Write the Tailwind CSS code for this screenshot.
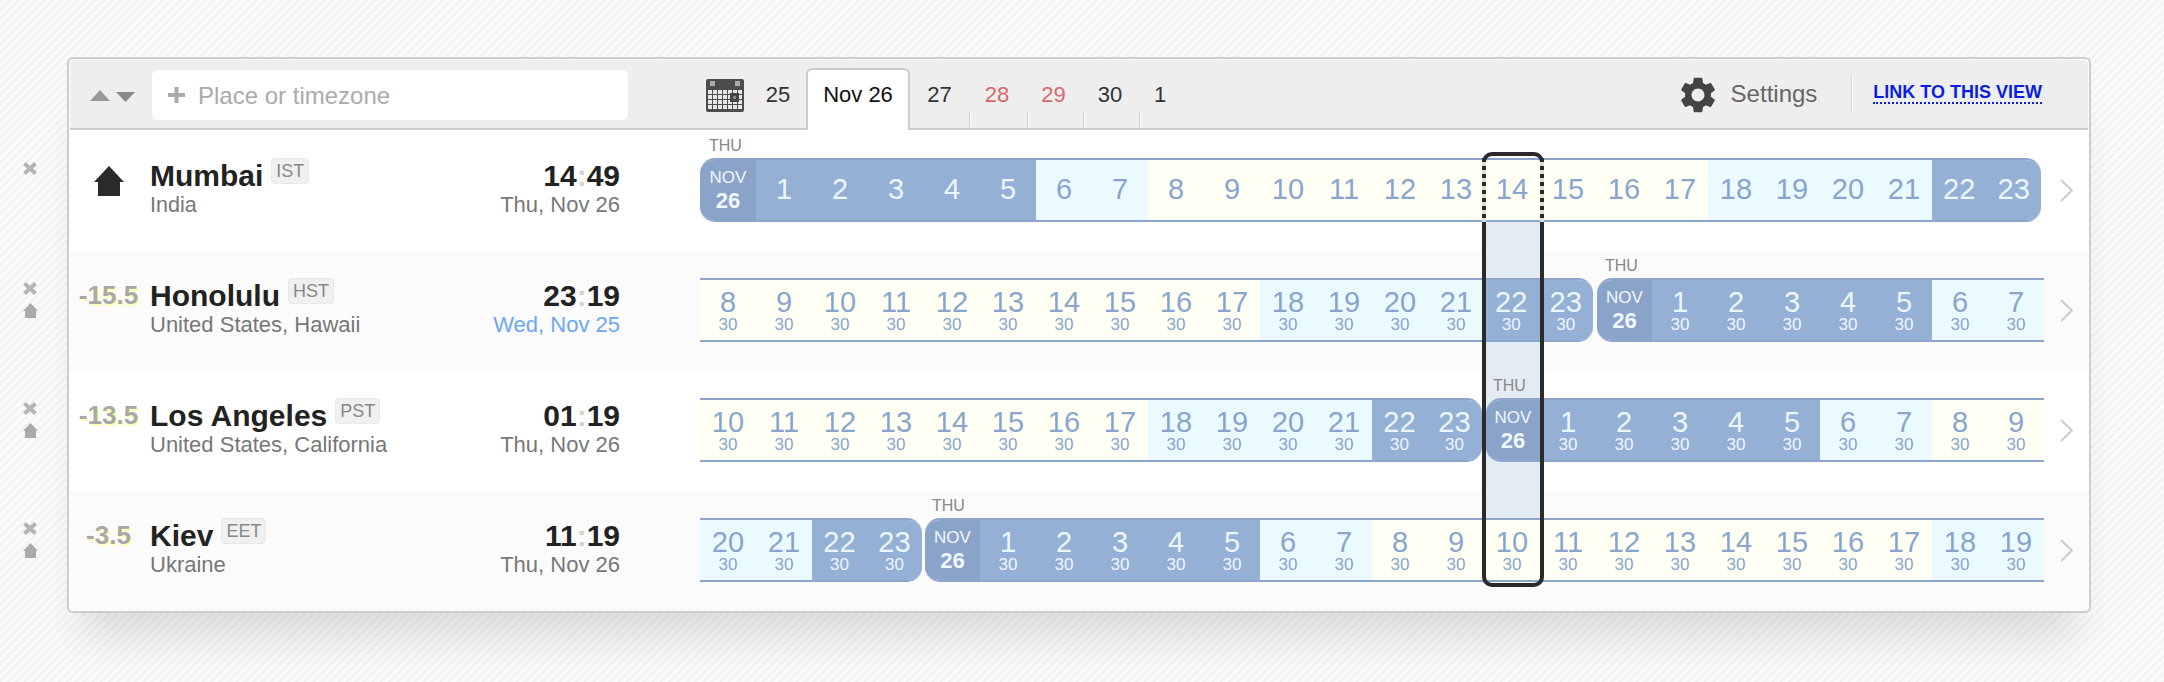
<!DOCTYPE html>
<html>
<head>
<meta charset="utf-8">
<title>Timezones</title>
<script src="https://cdn.jsdelivr.net/npm/@tailwindcss/browser@4"></script>
</head>
<body class="m-0 h-[682px] overflow-hidden pt-[57px] pl-[67px] font-['Liberation_Sans',Arial,sans-serif] bg-[repeating-linear-gradient(135deg,#f4f4f4_0,#f4f4f4_3px,#fbfbfb_3px,#fbfbfb_6px)]">
<div class="w-[2024px] h-[556px] border-2 border-[#ccc] rounded-[6px] bg-white p-px shadow-[0_40px_40px_-16px_rgba(0,0,0,0.12)]">

  <!-- header -->
  <div class="flex h-[70px] bg-[#eee] border-b-2 border-[#ccc] rounded-t-[4px]">
    <svg class="ml-[20px] mt-[30px] shrink-0" width="20" height="11" viewBox="0 0 20 11"><path d="M10 0L20 11H0Z" fill="#999"/></svg>
    <svg class="ml-[6px] mt-[32px] shrink-0" width="19" height="10" viewBox="0 0 19 10"><path d="M0 0H19L9.5 10Z" fill="#888"/></svg>
    <div class="ml-[17px] mt-[10px] w-[476px] h-[50px] rounded-[6px] bg-white flex items-center pl-[16px] shrink-0">
      <svg width="17" height="16" viewBox="0 0 17 16"><path d="M8.5 0V16M0 8H17" stroke="#aaa" stroke-width="4"/></svg>
      <span class="ml-[13px] pt-px text-[24px] leading-[28px] text-[#aaa]">Place or timezone</span>
    </div>
    <svg class="ml-[78px] mt-[19px] shrink-0" width="38" height="33" viewBox="0 0 38 33">
      <defs><pattern id="calgrid" x="2" y="11" width="5" height="5" patternUnits="userSpaceOnUse"><rect width="4" height="4" fill="#e8e8e8"/></pattern></defs>
      <rect width="38" height="33" rx="2" fill="#4c4c4c"/>
      <rect x="2" y="11" width="34" height="20" fill="url(#calgrid)"/>
      <rect x="4" y="2" width="5" height="5" fill="#aaa"/>
      <rect x="29" y="2" width="5" height="5" fill="#aaa"/>
      <rect x="24" y="14" width="9" height="9" fill="#444"/>
      <rect x="27" y="17" width="3" height="3" fill="#888"/>
    </svg>
    <div class="w-[62px] shrink-0 pl-[6px] pt-[21px] text-center text-[22px] leading-[28px] text-[#333]">25</div>
    <div class="relative z-10 mt-[8px] w-[104px] h-[62px] shrink-0 border-x-2 border-t-2 border-[#ccc] rounded-t-[6px] bg-white pt-[11px] text-center text-[22px] leading-[28px] text-[#111]">Nov 26</div>
    <div class="w-[59px] shrink-0 pt-[21px] text-center text-[22px] leading-[28px] text-[#333]">27</div>
    <div class="w-[2px] h-[15px] mt-[52px] shrink-0 border-l border-[#ccc] bg-white"></div>
    <div class="w-[56px] shrink-0 pr-[4px] pt-[21px] text-center text-[22px] leading-[28px] text-[#d9686e]">28</div>
    <div class="w-[2px] h-[15px] mt-[52px] shrink-0 border-l border-[#ccc] bg-white"></div>
    <div class="w-[54px] shrink-0 pr-[5px] pt-[21px] text-center text-[22px] leading-[28px] text-[#d9686e]">29</div>
    <div class="w-[2px] h-[15px] mt-[52px] shrink-0 border-l border-[#ccc] bg-white"></div>
    <div class="w-[54px] shrink-0 pr-[4px] pt-[21px] text-center text-[22px] leading-[28px] text-[#333]">30</div>
    <div class="w-[2px] h-[15px] mt-[52px] shrink-0 border-l border-[#ccc] bg-white"></div>
    <div class="w-[38px] shrink-0 pt-[21px] text-center text-[22px] leading-[28px] text-[#333]">1</div>
    <div class="ml-auto flex">
      <svg class="mt-[17px]" width="36" height="36" viewBox="2 2 20 20"><path fill="#444" fill-rule="evenodd" d="M19.14 12.94c.04-.3.06-.61.06-.94 0-.32-.02-.64-.07-.94l2.03-1.58c.18-.14.23-.41.12-.61l-1.92-3.32c-.12-.22-.37-.29-.59-.22l-2.39.96c-.5-.38-1.03-.7-1.62-.94l-.36-2.54c-.04-.24-.24-.41-.48-.41h-3.84c-.24 0-.43.17-.47.41l-.36 2.54c-.59.24-1.13.57-1.62.94l-2.39-.96c-.22-.08-.47 0-.59.22L2.74 8.87c-.12.21-.08.47.12.61l2.03 1.58c-.05.3-.09.63-.09.94s.02.64.07.94l-2.03 1.58c-.18.14-.23.41-.12.61l1.92 3.32c.12.22.37.29.59.22l2.39-.96c.5.38 1.03.7 1.62.94l.36 2.54c.05.24.24.41.48.41h3.84c.24 0 .44-.17.47-.41l.36-2.54c.59-.24 1.13-.56 1.62-.94l2.39.96c.22.08.47 0 .59-.22l1.92-3.32c.12-.22.07-.47-.12-.61l-2.01-1.58zM12 15.6c-1.98 0-3.6-1.62-3.6-3.6s1.62-3.6 3.6-3.6 3.6 1.62 3.6 3.6-1.62 3.6-3.6 3.6z"/></svg>
      <span class="ml-[15px] mt-[20px] text-[24px] leading-[28px] text-[#666]">Settings</span>
      <div class="ml-[34px] mt-[14px] w-[2px] h-[39px] border-l border-[#d4d4d4] bg-white"></div>
      <a class="ml-[20px] mr-[46px] mt-[22px] h-[22px] border-b-2 border-dotted border-[#0a1ee0] text-[18px] leading-[20px] font-bold text-[#0a1ee0] whitespace-nowrap">LINK TO THIS VIEW</a>
    </div>
  </div>

  <!-- rows -->
  <div class="relative">
    <div class="absolute left-[1416px] top-[92px] w-[54px] h-[296px] bg-[#e3ebf3]"></div>

    <!-- Mumbai -->
    <div class="flex h-[120px]">
      <div class="-ml-[47px] w-[14px] shrink-0 pt-[32px]">
        <svg width="14" height="13" viewBox="0 0 14 13"><path d="M1.5 1.5L12.5 11.5M12.5 1.5L1.5 11.5" stroke="#b4b4b4" stroke-width="4"/></svg>
      </div>
      <div class="ml-[33px] w-[77px] shrink-0 flex justify-center pt-[36px]">
        <svg width="30" height="30" viewBox="0 0 30 30"><path d="M15 0L30 16H26V30H4V16H0Z" fill="#2a2a2a"/></svg>
      </div>
      <div class="ml-[3px] w-[470px] shrink-0 flex justify-between pt-[29px]">
        <div>
          <div class="flex items-start"><span class="text-[30px] leading-[34px] font-bold text-[#222]">Mumbai</span><span class="ml-[8px] -mt-px h-[26px] border border-[#e8e8e8] rounded-[4px] bg-[#f0f0f0] px-[4px] text-[18px] leading-[24px] text-[#888]">IST</span></div>
          <div class="text-[21.5px] leading-[24px] text-[#777]">India</div>
        </div>
        <div class="text-right">
          <div class="text-[30px] leading-[34px] font-bold text-[#222]">14<span class="text-[#d4d4d4]">:</span>49</div>
          <div class="text-[22px] leading-[24px] text-[#777]">Thu, Nov 26</div>
        </div>
      </div>
      <div class="relative z-10 ml-[80px] w-[1344px] shrink-0 pt-[6px]">
        <div class="ml-[9px] h-[22px] text-[16px] leading-[20px] text-[#888]">THU</div>
        <div class="flex w-[1341px] h-16 overflow-hidden rounded-[15px] border-y-2 border-[#8ba5cd] text-center text-[29px] leading-[58px]">
          <div class="w-14 shrink-0 bg-[#8aa3c9] pt-[7px] text-[#f2f7fc]"><div class="text-[17px] leading-[22px]">NOV</div><div class="text-[22px] leading-[24px] font-bold">26</div></div>
          <div class="flex bg-[#94b1d5] text-[#ecf6fd]"><div class="w-14">1</div><div class="w-14">2</div><div class="w-14">3</div><div class="w-14">4</div><div class="w-14">5</div></div>
          <div class="flex bg-[#ebfaff] text-[#8aa5cd]"><div class="w-14">6</div><div class="w-14">7</div></div>
          <div class="flex bg-[#fffff3] text-[#8aa5cd]"><div class="w-14">8</div><div class="w-14">9</div><div class="w-14">10</div><div class="w-14">11</div><div class="w-14">12</div><div class="w-14">13</div><div class="w-14">14</div><div class="w-14">15</div><div class="w-14">16</div><div class="w-14">17</div></div>
          <div class="flex bg-[#ebfaff] text-[#8aa5cd]"><div class="w-14">18</div><div class="w-14">19</div><div class="w-14">20</div><div class="w-14">21</div></div>
          <div class="flex flex-1 bg-[#94b1d5] text-[#ecf6fd]"><div class="flex-1">22</div><div class="flex-1">23</div></div>
        </div>
      </div>
      <svg class="ml-[16px] mt-[49px] shrink-0" width="13" height="23" viewBox="0 0 13 23"><path d="M1 1L12 11.5L1 22" fill="none" stroke="#ccc" stroke-width="2"/></svg>
    </div>

    <!-- Honolulu -->
    <div class="flex h-[120px] bg-[#fbfbfb]">
      <div class="-ml-[47px] w-[14px] shrink-0 pt-[32px]">
        <svg class="block" width="14" height="13" viewBox="0 0 14 13"><path d="M1.5 1.5L12.5 11.5M12.5 1.5L1.5 11.5" stroke="#b4b4b4" stroke-width="4"/></svg>
        <svg class="block mt-[8px]" width="15" height="15" viewBox="0 0 30 30"><path d="M15 0L30 16H26V30H4V16H0Z" fill="#aaa"/></svg>
      </div>
      <div class="ml-[33px] w-[77px] shrink-0 pt-[30px] text-center text-[26px] leading-[30px] font-bold text-[#a8a8a8] [text-shadow:2px_2px_0_#ffffb4]">-15.5</div>
      <div class="ml-[3px] w-[470px] shrink-0 flex justify-between pt-[29px]">
        <div>
          <div class="flex items-start"><span class="text-[30px] leading-[34px] font-bold text-[#222]">Honolulu</span><span class="ml-[8px] -mt-px h-[26px] border border-[#e8e8e8] rounded-[4px] bg-[#f0f0f0] px-[4px] text-[18px] leading-[24px] text-[#888]">HST</span></div>
          <div class="text-[22px] leading-[24px] text-[#777]">United States, Hawaii</div>
        </div>
        <div class="text-right">
          <div class="text-[30px] leading-[34px] font-bold text-[#222]">23<span class="text-[#d4d4d4]">:</span>19</div>
          <div class="text-[22px] leading-[24px] text-[#6ea6f5]">Wed, Nov 25</div>
        </div>
      </div>
      <div class="relative z-10 ml-[80px] w-[1344px] shrink-0 pt-[6px]">
        <div class="ml-[905px] h-[22px] text-[16px] leading-[20px] text-[#888]">THU</div>
        <div class="flex h-16 text-center">
          <div class="flex w-[893px] shrink-0 overflow-hidden rounded-r-[15px] border-y-2 border-[#8ba5cd]">
            <div class="flex bg-[#fffff3] text-[#8aa5cd]"><div class="w-14 pt-2"><div class="text-[29px] leading-7">8</div><div class="text-[17px] leading-[17px]">30</div></div><div class="w-14 pt-2"><div class="text-[29px] leading-7">9</div><div class="text-[17px] leading-[17px]">30</div></div><div class="w-14 pt-2"><div class="text-[29px] leading-7">10</div><div class="text-[17px] leading-[17px]">30</div></div><div class="w-14 pt-2"><div class="text-[29px] leading-7">11</div><div class="text-[17px] leading-[17px]">30</div></div><div class="w-14 pt-2"><div class="text-[29px] leading-7">12</div><div class="text-[17px] leading-[17px]">30</div></div><div class="w-14 pt-2"><div class="text-[29px] leading-7">13</div><div class="text-[17px] leading-[17px]">30</div></div><div class="w-14 pt-2"><div class="text-[29px] leading-7">14</div><div class="text-[17px] leading-[17px]">30</div></div><div class="w-14 pt-2"><div class="text-[29px] leading-7">15</div><div class="text-[17px] leading-[17px]">30</div></div><div class="w-14 pt-2"><div class="text-[29px] leading-7">16</div><div class="text-[17px] leading-[17px]">30</div></div><div class="w-14 pt-2"><div class="text-[29px] leading-7">17</div><div class="text-[17px] leading-[17px]">30</div></div></div>
            <div class="flex bg-[#ebfaff] text-[#8aa5cd]"><div class="w-14 pt-2"><div class="text-[29px] leading-7">18</div><div class="text-[17px] leading-[17px]">30</div></div><div class="w-14 pt-2"><div class="text-[29px] leading-7">19</div><div class="text-[17px] leading-[17px]">30</div></div><div class="w-14 pt-2"><div class="text-[29px] leading-7">20</div><div class="text-[17px] leading-[17px]">30</div></div><div class="w-14 pt-2"><div class="text-[29px] leading-7">21</div><div class="text-[17px] leading-[17px]">30</div></div></div>
            <div class="flex flex-1 bg-[#94b1d5] text-[#ecf6fd]"><div class="flex-1 pt-2"><div class="text-[29px] leading-7">22</div><div class="text-[17px] leading-[17px]">30</div></div><div class="flex-1 pt-2"><div class="text-[29px] leading-7">23</div><div class="text-[17px] leading-[17px]">30</div></div></div>
          </div>
          <div class="ml-[4px] flex flex-1 overflow-hidden rounded-l-[15px] border-y-2 border-[#8ba5cd]">
            <div class="w-[55px] shrink-0 bg-[#8aa3c9] pt-[7px] text-[#f2f7fc]"><div class="text-[17px] leading-[22px]">NOV</div><div class="text-[22px] leading-[24px] font-bold">26</div></div>
            <div class="flex bg-[#94b1d5] text-[#ecf6fd]"><div class="w-14 pt-2"><div class="text-[29px] leading-7">1</div><div class="text-[17px] leading-[17px]">30</div></div><div class="w-14 pt-2"><div class="text-[29px] leading-7">2</div><div class="text-[17px] leading-[17px]">30</div></div><div class="w-14 pt-2"><div class="text-[29px] leading-7">3</div><div class="text-[17px] leading-[17px]">30</div></div><div class="w-14 pt-2"><div class="text-[29px] leading-7">4</div><div class="text-[17px] leading-[17px]">30</div></div><div class="w-14 pt-2"><div class="text-[29px] leading-7">5</div><div class="text-[17px] leading-[17px]">30</div></div></div>
            <div class="flex flex-1 bg-[#ebfaff] text-[#8aa5cd]"><div class="w-14 pt-2"><div class="text-[29px] leading-7">6</div><div class="text-[17px] leading-[17px]">30</div></div><div class="w-14 pt-2"><div class="text-[29px] leading-7">7</div><div class="text-[17px] leading-[17px]">30</div></div></div>
          </div>
        </div>
      </div>
      <svg class="ml-[16px] mt-[49px] shrink-0" width="13" height="23" viewBox="0 0 13 23"><path d="M1 1L12 11.5L1 22" fill="none" stroke="#ccc" stroke-width="2"/></svg>
    </div>

    <!-- Los Angeles -->
    <div class="flex h-[120px]">
      <div class="-ml-[47px] w-[14px] shrink-0 pt-[32px]">
        <svg class="block" width="14" height="13" viewBox="0 0 14 13"><path d="M1.5 1.5L12.5 11.5M12.5 1.5L1.5 11.5" stroke="#b4b4b4" stroke-width="4"/></svg>
        <svg class="block mt-[8px]" width="15" height="15" viewBox="0 0 30 30"><path d="M15 0L30 16H26V30H4V16H0Z" fill="#aaa"/></svg>
      </div>
      <div class="ml-[33px] w-[77px] shrink-0 pt-[30px] text-center text-[26px] leading-[30px] font-bold text-[#a8a8a8] [text-shadow:2px_2px_0_#ffffb4]">-13.5</div>
      <div class="ml-[3px] w-[470px] shrink-0 flex justify-between pt-[29px]">
        <div>
          <div class="flex items-start"><span class="text-[30px] leading-[34px] font-bold text-[#222]">Los Angeles</span><span class="ml-[8px] -mt-px h-[26px] border border-[#e8e8e8] rounded-[4px] bg-[#f0f0f0] px-[4px] text-[18px] leading-[24px] text-[#888]">PST</span></div>
          <div class="text-[22px] leading-[24px] text-[#777]">United States, California</div>
        </div>
        <div class="text-right">
          <div class="text-[30px] leading-[34px] font-bold text-[#222]">01<span class="text-[#d4d4d4]">:</span>19</div>
          <div class="text-[22px] leading-[24px] text-[#777]">Thu, Nov 26</div>
        </div>
      </div>
      <div class="relative z-10 ml-[80px] w-[1344px] shrink-0 pt-[6px]">
        <div class="ml-[793px] h-[22px] text-[16px] leading-[20px] text-[#888]">THU</div>
        <div class="flex h-16 text-center">
          <div class="flex w-[782px] shrink-0 overflow-hidden rounded-r-[15px] border-y-2 border-[#8ba5cd]">
            <div class="flex bg-[#fffff3] text-[#8aa5cd]"><div class="w-14 pt-2"><div class="text-[29px] leading-7">10</div><div class="text-[17px] leading-[17px]">30</div></div><div class="w-14 pt-2"><div class="text-[29px] leading-7">11</div><div class="text-[17px] leading-[17px]">30</div></div><div class="w-14 pt-2"><div class="text-[29px] leading-7">12</div><div class="text-[17px] leading-[17px]">30</div></div><div class="w-14 pt-2"><div class="text-[29px] leading-7">13</div><div class="text-[17px] leading-[17px]">30</div></div><div class="w-14 pt-2"><div class="text-[29px] leading-7">14</div><div class="text-[17px] leading-[17px]">30</div></div><div class="w-14 pt-2"><div class="text-[29px] leading-7">15</div><div class="text-[17px] leading-[17px]">30</div></div><div class="w-14 pt-2"><div class="text-[29px] leading-7">16</div><div class="text-[17px] leading-[17px]">30</div></div><div class="w-14 pt-2"><div class="text-[29px] leading-7">17</div><div class="text-[17px] leading-[17px]">30</div></div></div>
            <div class="flex bg-[#ebfaff] text-[#8aa5cd]"><div class="w-14 pt-2"><div class="text-[29px] leading-7">18</div><div class="text-[17px] leading-[17px]">30</div></div><div class="w-14 pt-2"><div class="text-[29px] leading-7">19</div><div class="text-[17px] leading-[17px]">30</div></div><div class="w-14 pt-2"><div class="text-[29px] leading-7">20</div><div class="text-[17px] leading-[17px]">30</div></div><div class="w-14 pt-2"><div class="text-[29px] leading-7">21</div><div class="text-[17px] leading-[17px]">30</div></div></div>
            <div class="flex flex-1 bg-[#94b1d5] text-[#ecf6fd]"><div class="flex-1 pt-2"><div class="text-[29px] leading-7">22</div><div class="text-[17px] leading-[17px]">30</div></div><div class="flex-1 pt-2"><div class="text-[29px] leading-7">23</div><div class="text-[17px] leading-[17px]">30</div></div></div>
          </div>
          <div class="ml-[4px] flex flex-1 overflow-hidden rounded-l-[15px] border-y-2 border-[#8ba5cd]">
            <div class="w-[54px] shrink-0 bg-[#8aa3c9] pt-[7px] text-[#f2f7fc]"><div class="text-[17px] leading-[22px]">NOV</div><div class="text-[22px] leading-[24px] font-bold">26</div></div>
            <div class="flex bg-[#94b1d5] text-[#ecf6fd]"><div class="w-14 pt-2"><div class="text-[29px] leading-7">1</div><div class="text-[17px] leading-[17px]">30</div></div><div class="w-14 pt-2"><div class="text-[29px] leading-7">2</div><div class="text-[17px] leading-[17px]">30</div></div><div class="w-14 pt-2"><div class="text-[29px] leading-7">3</div><div class="text-[17px] leading-[17px]">30</div></div><div class="w-14 pt-2"><div class="text-[29px] leading-7">4</div><div class="text-[17px] leading-[17px]">30</div></div><div class="w-14 pt-2"><div class="text-[29px] leading-7">5</div><div class="text-[17px] leading-[17px]">30</div></div></div>
            <div class="flex bg-[#ebfaff] text-[#8aa5cd]"><div class="w-14 pt-2"><div class="text-[29px] leading-7">6</div><div class="text-[17px] leading-[17px]">30</div></div><div class="w-14 pt-2"><div class="text-[29px] leading-7">7</div><div class="text-[17px] leading-[17px]">30</div></div></div>
            <div class="flex flex-1 bg-[#fffff3] text-[#8aa5cd]"><div class="w-14 pt-2"><div class="text-[29px] leading-7">8</div><div class="text-[17px] leading-[17px]">30</div></div><div class="w-14 pt-2"><div class="text-[29px] leading-7">9</div><div class="text-[17px] leading-[17px]">30</div></div></div>
          </div>
        </div>
      </div>
      <svg class="ml-[16px] mt-[49px] shrink-0" width="13" height="23" viewBox="0 0 13 23"><path d="M1 1L12 11.5L1 22" fill="none" stroke="#ccc" stroke-width="2"/></svg>
    </div>

    <!-- Kiev -->
    <div class="flex h-[120px] bg-[#fbfbfb]">
      <div class="-ml-[47px] w-[14px] shrink-0 pt-[32px]">
        <svg class="block" width="14" height="13" viewBox="0 0 14 13"><path d="M1.5 1.5L12.5 11.5M12.5 1.5L1.5 11.5" stroke="#b4b4b4" stroke-width="4"/></svg>
        <svg class="block mt-[8px]" width="15" height="15" viewBox="0 0 30 30"><path d="M15 0L30 16H26V30H4V16H0Z" fill="#aaa"/></svg>
      </div>
      <div class="ml-[33px] w-[77px] shrink-0 pt-[30px] text-center text-[26px] leading-[30px] font-bold text-[#a8a8a8] [text-shadow:2px_2px_0_#ffffb4]">-3.5</div>
      <div class="ml-[3px] w-[470px] shrink-0 flex justify-between pt-[29px]">
        <div>
          <div class="flex items-start"><span class="text-[30px] leading-[34px] font-bold text-[#222]">Kiev</span><span class="ml-[8px] -mt-px h-[26px] border border-[#e8e8e8] rounded-[4px] bg-[#f0f0f0] px-[4px] text-[18px] leading-[24px] text-[#888]">EET</span></div>
          <div class="text-[22px] leading-[24px] text-[#777]">Ukraine</div>
        </div>
        <div class="text-right">
          <div class="text-[30px] leading-[34px] font-bold text-[#222]">11<span class="text-[#d4d4d4]">:</span>19</div>
          <div class="text-[22px] leading-[24px] text-[#777]">Thu, Nov 26</div>
        </div>
      </div>
      <div class="relative z-10 ml-[80px] w-[1344px] shrink-0 pt-[6px]">
        <div class="ml-[232px] h-[22px] text-[16px] leading-[20px] text-[#888]">THU</div>
        <div class="flex h-16 text-center">
          <div class="flex w-[222px] shrink-0 overflow-hidden rounded-r-[15px] border-y-2 border-[#8ba5cd]">
            <div class="flex bg-[#ebfaff] text-[#8aa5cd]"><div class="w-14 pt-2"><div class="text-[29px] leading-7">20</div><div class="text-[17px] leading-[17px]">30</div></div><div class="w-14 pt-2"><div class="text-[29px] leading-7">21</div><div class="text-[17px] leading-[17px]">30</div></div></div>
            <div class="flex flex-1 bg-[#94b1d5] text-[#ecf6fd]"><div class="flex-1 pt-2"><div class="text-[29px] leading-7">22</div><div class="text-[17px] leading-[17px]">30</div></div><div class="flex-1 pt-2"><div class="text-[29px] leading-7">23</div><div class="text-[17px] leading-[17px]">30</div></div></div>
          </div>
          <div class="ml-[3px] flex flex-1 overflow-hidden rounded-l-[15px] border-y-2 border-[#8ba5cd]">
            <div class="w-[55px] shrink-0 bg-[#8aa3c9] pt-[7px] text-[#f2f7fc]"><div class="text-[17px] leading-[22px]">NOV</div><div class="text-[22px] leading-[24px] font-bold">26</div></div>
            <div class="flex bg-[#94b1d5] text-[#ecf6fd]"><div class="w-14 pt-2"><div class="text-[29px] leading-7">1</div><div class="text-[17px] leading-[17px]">30</div></div><div class="w-14 pt-2"><div class="text-[29px] leading-7">2</div><div class="text-[17px] leading-[17px]">30</div></div><div class="w-14 pt-2"><div class="text-[29px] leading-7">3</div><div class="text-[17px] leading-[17px]">30</div></div><div class="w-14 pt-2"><div class="text-[29px] leading-7">4</div><div class="text-[17px] leading-[17px]">30</div></div><div class="w-14 pt-2"><div class="text-[29px] leading-7">5</div><div class="text-[17px] leading-[17px]">30</div></div></div>
            <div class="flex bg-[#ebfaff] text-[#8aa5cd]"><div class="w-14 pt-2"><div class="text-[29px] leading-7">6</div><div class="text-[17px] leading-[17px]">30</div></div><div class="w-14 pt-2"><div class="text-[29px] leading-7">7</div><div class="text-[17px] leading-[17px]">30</div></div></div>
            <div class="flex bg-[#fffff3] text-[#8aa5cd]"><div class="w-14 pt-2"><div class="text-[29px] leading-7">8</div><div class="text-[17px] leading-[17px]">30</div></div><div class="w-14 pt-2"><div class="text-[29px] leading-7">9</div><div class="text-[17px] leading-[17px]">30</div></div><div class="w-14 pt-2"><div class="text-[29px] leading-7">10</div><div class="text-[17px] leading-[17px]">30</div></div><div class="w-14 pt-2"><div class="text-[29px] leading-7">11</div><div class="text-[17px] leading-[17px]">30</div></div><div class="w-14 pt-2"><div class="text-[29px] leading-7">12</div><div class="text-[17px] leading-[17px]">30</div></div><div class="w-14 pt-2"><div class="text-[29px] leading-7">13</div><div class="text-[17px] leading-[17px]">30</div></div><div class="w-14 pt-2"><div class="text-[29px] leading-7">14</div><div class="text-[17px] leading-[17px]">30</div></div><div class="w-14 pt-2"><div class="text-[29px] leading-7">15</div><div class="text-[17px] leading-[17px]">30</div></div><div class="w-14 pt-2"><div class="text-[29px] leading-7">16</div><div class="text-[17px] leading-[17px]">30</div></div><div class="w-14 pt-2"><div class="text-[29px] leading-7">17</div><div class="text-[17px] leading-[17px]">30</div></div></div>
            <div class="flex flex-1 bg-[#ebfaff] text-[#8aa5cd]"><div class="w-14 pt-2"><div class="text-[29px] leading-7">18</div><div class="text-[17px] leading-[17px]">30</div></div><div class="w-14 pt-2"><div class="text-[29px] leading-7">19</div><div class="text-[17px] leading-[17px]">30</div></div></div>
          </div>
        </div>
      </div>
      <svg class="ml-[16px] mt-[49px] shrink-0" width="13" height="23" viewBox="0 0 13 23"><path d="M1 1L12 11.5L1 22" fill="none" stroke="#ccc" stroke-width="2"/></svg>
    </div>

    <!-- selected hour frame -->
    <div class="absolute z-20 left-[1412px] top-[22px] w-[62px] h-[435px] border-4 border-[#2a2a2a] rounded-[10px]">
      <div class="absolute -left-1 top-[2px] w-1 h-16 bg-[repeating-linear-gradient(180deg,#2a2a2a_0,#2a2a2a_4px,#ddd_4px,#ddd_8px)]"></div>
      <div class="absolute -right-1 top-[2px] w-1 h-16 bg-[repeating-linear-gradient(180deg,#2a2a2a_0,#2a2a2a_4px,#ddd_4px,#ddd_8px)]"></div>
    </div>
  </div>
</div>
</body>
</html>
